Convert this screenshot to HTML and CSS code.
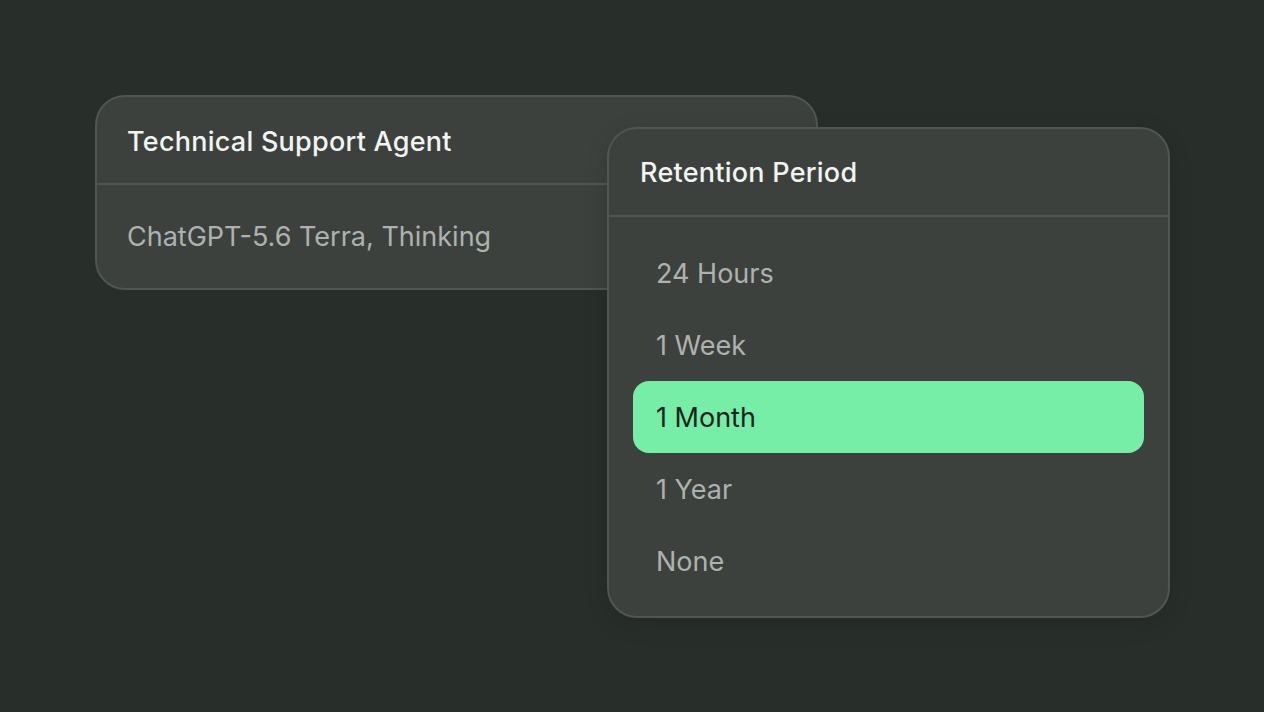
FILE: index.html
```html
<!DOCTYPE html>
<html lang="en">

<head>
    <meta charset="UTF-8">
    <meta name="viewport" content="width=device-width, initial-scale=1.0">
    <title>Retention Period</title>
    <link rel="stylesheet" href="styles.css">
</head>

<body>
    <div class="stage">
        <div class="card agent">
            <div class="card-head">Technical Support Agent</div>
            <div class="card-body">ChatGPT-5.6 Terra, Thinking</div>
        </div>
        <div class="card menu">
            <div class="card-head">Retention Period</div>
            <ul class="options">
                <li class="option">24 Hours</li>
                <li class="option">1 Week</li>
                <li class="option current">1 Month</li>
                <li class="option">1 Year</li>
                <li class="option">None</li>
            </ul>
        </div>
    </div>
</body>

</html>
```

FILE: styles.css
```css
* {
    margin: 0;
    padding: 0;
    box-sizing: border-box;
}

body {
    background-color: #282e2a;
    font-family: Inter, "DejaVu Sans", sans-serif;
    overflow: hidden;
}

.stage {
    position: relative;
    width: 100vw;
    height: 100vh;
    padding: 95px 0 0 95px;
}

.card {
    background-color: #3c413e;
    border: 2px solid #505652;
    border-radius: 30px;
}

.card-head {
    height: 88px;
    display: flex;
    align-items: center;
    padding: 0 30px;
    font-size: 27px;
    font-weight: 500;
    letter-spacing: 0.25px;
    color: #f2f4f2;
    border-bottom: 2px solid #505652;
}

.agent {
    width: 723px;
    height: 195px;
}

.agent .card-head {
    padding-top: 2px;
}

.card-body {
    display: flex;
    align-items: center;
    height: 103px;
    padding: 0 30px;
    font-size: 27px;
    color: #aeb2ae;
}

.menu {
    position: absolute;
    left: 607px;
    top: 127px;
    width: 563px;
    height: 491px;
    box-shadow: 0 6px 24px rgba(0, 0, 0, 0.12);
}

.menu .card-head {
    padding-left: 31px;
}

.options {
    list-style: none;
    padding: 20px 24px;
}

.option {
    display: flex;
    align-items: center;
    height: 72px;
    padding: 0 23px;
    font-size: 27px;
    color: #aeb2ae;
    border-radius: 16px;
}

.option.current {
    background-color: #76eea8;
    color: #17241b;
}
```
